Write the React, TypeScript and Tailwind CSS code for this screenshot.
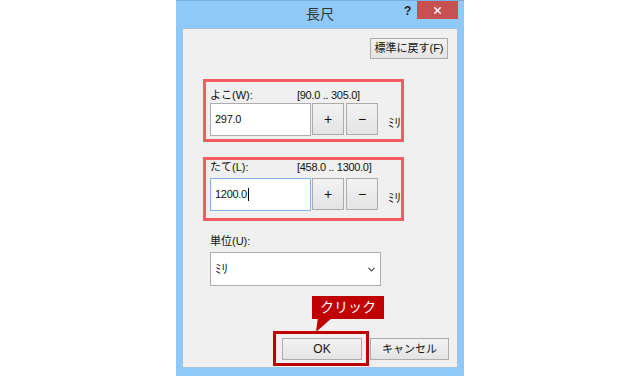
import { ChevronDown, X } from "lucide-react";
import type { ReactNode } from "react";

const font = "font-['Liberation_Sans','Noto_Sans_CJK_JP',sans-serif]";

function Button({ children, className = "" }: { children: ReactNode; className?: string }) {
  return (
    <div
      className={`flex items-center justify-center border border-[#acacac] bg-linear-to-b from-[#f2f2f2] to-[#e4e4e4] ${className}`}
    >
      {children}
    </div>
  );
}

function SizeField({
  label,
  range,
  value,
  focused,
}: {
  label: string;
  range: string;
  value: ReactNode;
  focused?: boolean;
}) {
  return (
    <>
      <div className="flex h-[16px] items-center leading-[16px]">
        <span className="w-[87px]">{label}</span>
        <span className="tracking-[-0.3px]">{range}</span>
      </div>
      <div className="flex items-start">
        <div
          className={`flex h-[33px] w-[101px] items-center border bg-white pl-[4px] tracking-[-0.3px] ${
            focused ? "border-[#7eb4ea]" : "border-[#abadb3]"
          }`}
        >
          {value}
        </div>
        <Button className="ml-[1px] h-[32px] w-[32px] text-[14px]">+</Button>
        <Button className="ml-[2px] h-[32px] w-[32px] text-[14px]">−</Button>
        <span className="ml-[10px] mt-[10px] text-[13px]">ﾐﾘ</span>
      </div>
    </>
  );
}

export default function App() {
  return (
    <div className={`flex h-[376px] w-[640px] justify-center overflow-hidden bg-white text-[11px] text-[#111] ${font}`}>
      <div className="flex h-[384px] w-[288px] flex-col border-t border-[#79afe0] bg-[#8fc9f8]">
        {/* title bar */}
        <div className="relative flex h-[27px] items-center justify-center">
          <span className="text-[14px] text-[#333]">長尺</span>
          <span className="absolute left-[228px] top-[4px] text-[12px] font-bold leading-none text-[#222]">?</span>
          <div className="absolute right-[6px] top-0 flex h-[18px] w-[41px] items-center justify-center bg-[#c75050]">
            <X size={11} strokeWidth={3.2} color="white" />
          </div>
        </div>

        {/* client area */}
        <div className="relative mx-[6px] flex h-[340px] flex-col border border-[#a3c3e0] bg-[#f0f0f0]">
          <div className="mt-[9px] flex justify-end pr-[9px]">
            <Button className="h-[21px] w-[78px]">標準に戻す(F)</Button>
          </div>

          <div className="ml-[20px] mt-[20px] h-[63px] w-[201px] border-[3px] border-[#f15c65] pl-[4px] pt-[5px]">
            <SizeField label="よこ(W):" range="[90.0 .. 305.0]" value="297.0" />
          </div>

          <div className="ml-[20px] mt-[15px] h-[64px] w-[201px] border-[3px] border-[#f15c65] pl-[4px]">
            <div className="[&>div:first-child]:h-[14px] [&>div:last-child]:mt-[4px]">
              <SizeField
                label="たて(L):"
                range="[458.0 .. 1300.0]"
                focused
                value={
                  <>
                    1200.0
                    <span className="ml-[1px] inline-block h-[13px] w-px bg-black" />
                  </>
                }
              />
            </div>
          </div>

          <div className="ml-[27px] mt-[12px] h-[16px] leading-[16px]">単位(U):</div>
          <div className="ml-[27px] mt-[3px] flex h-[34px] w-[171px] items-center justify-between border border-[#abadb3] bg-white pl-[4px] pr-[3px]">
            <span className="text-[13px]">ﾐﾘ</span>
            <ChevronDown size={11} strokeWidth={2.6} color="#444" />
          </div>

          <div className="ml-[90px] mt-[45px] flex items-start">
            <div className="border-[3px] border-[#c00000] pb-[3px] pl-[6px] pr-[4px] pt-[4px]">
              <Button className="h-[22px] w-[80px] border-[#62aaea] text-[12px]">OK</Button>
            </div>
            <Button className="ml-[1px] mt-[7px] h-[22px] w-[79px]">キャンセル</Button>
          </div>

          {/* callout */}
          <div className="absolute left-[129px] top-[267px] flex h-[23px] w-[72px] items-center justify-center bg-[#c00000] text-[14px] font-normal text-white">
            クリック
          </div>
          <svg className="absolute left-[129px] top-[288px]" width="25" height="16" viewBox="0 0 25 16">
            <polygon points="6,0 21,0 4,15" fill="#c00000" />
          </svg>
        </div>
      </div>
    </div>
  );
}
